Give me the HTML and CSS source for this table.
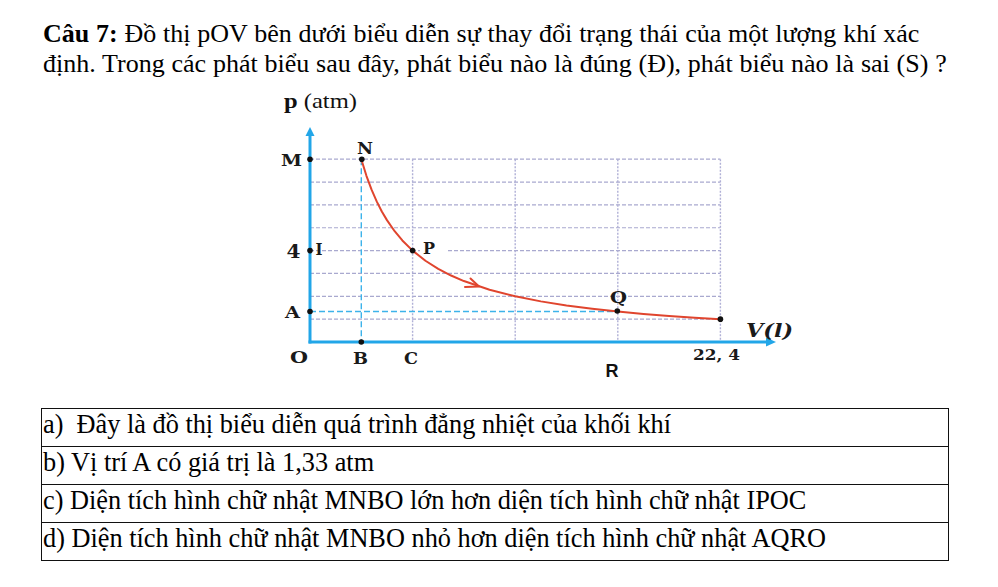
FILE: index.html
```html
<!DOCTYPE html>
<html lang="vi">
<head>
<meta charset="utf-8">
<title>Câu 7</title>
<link rel="stylesheet" href="styles.css">
</head>
<body>
<div class="page">
  <p class="question"><b>Câu 7:</b> Đồ thị pOV bên dưới biểu diễn sự thay đổi trạng thái của một lượng khí xác<br>định. Trong các phát biểu sau đây, phát biểu nào là đúng (Đ), phát biểu nào là sai (S) ?</p>
  <svg class="graph" width="540" height="310" viewBox="260 85 540 310" xmlns="http://www.w3.org/2000/svg">
    <!-- grid -->
    <g class="grid-h">
      <line x1="310" y1="319.15" x2="720.4" y2="319.15"/>
      <line x1="310" y1="296.3" x2="720.4" y2="296.3"/>
      <line x1="310" y1="273.45" x2="720.4" y2="273.45"/>
      <line x1="310" y1="250.6" x2="720.4" y2="250.6"/>
      <line x1="310" y1="227.75" x2="720.4" y2="227.75"/>
      <line x1="310" y1="204.9" x2="720.4" y2="204.9"/>
      <line x1="310" y1="182.05" x2="720.4" y2="182.05"/>
      <line x1="310" y1="159.2" x2="720.4" y2="159.2"/>
    </g>
    <g class="grid-v">
      <line x1="412.6" y1="159.2" x2="412.6" y2="342"/>
      <line x1="515.2" y1="159.2" x2="515.2" y2="342"/>
      <line x1="617.8" y1="159.2" x2="617.8" y2="342"/>
      <line x1="720.4" y1="159.2" x2="720.4" y2="342"/>
    </g>
    <g class="guide">
      <line x1="361.3" y1="159.2" x2="361.3" y2="342"/>
      <line x1="310" y1="311.5" x2="617.8" y2="311.5"/>
    </g>
    <!-- label backgrounds -->
    <rect class="mask" x="420" y="240" width="28" height="15"/>
    <!-- axes -->
    <g class="axis">
      <line x1="310" y1="343.5" x2="310" y2="134"/>
      <line x1="308.5" y1="342" x2="768" y2="342"/>
    </g>
    <path class="axis-head" d="M310 127 L314.5 136 L305.5 136 Z"/>
    <path class="axis-head" d="M776 342 L766 337.5 L766 346.5 Z"/>
    <!-- curve -->
    <polyline class="curve" points="361.3,159.2 366.43,175.82 371.56,189.67 376.69,201.38 381.82,211.43 386.95,220.13 394.65,231.21 402.34,240.44 412.6,250.6 425.43,260.76 438.25,268.88 451.08,275.53 463.9,281.07 489.55,289.77 515.2,296.3 540.85,301.38 566.5,305.44 592.15,308.76 617.8,311.53 643.45,313.88 669.1,315.89 694.75,317.63 720.4,319.15"/>
    <polyline class="curve" points="470.5,278.5 479,286.5 465,287"/>
    <!-- points -->
    <g class="dot">
      <circle cx="310" cy="159.2" r="2.8"/>
      <circle cx="361.8" cy="159.2" r="2.8"/>
      <circle cx="310" cy="250.6" r="2.8"/>
      <circle cx="412.6" cy="250.6" r="2.8"/>
      <circle cx="310" cy="311.5" r="2.8"/>
      <circle cx="361.3" cy="342" r="2.8"/>
      <circle cx="617.3" cy="311" r="2.8"/>
      <circle cx="720.4" cy="319.15" r="2.8"/>
    </g>
    <!-- labels -->
    <text class="lbl-title" x="284" y="108" textLength="73" lengthAdjust="spacingAndGlyphs"><tspan class="bold">p</tspan> (atm)</text>
    <g class="lbl">
      <text x="281" y="165.5" textLength="21" lengthAdjust="spacingAndGlyphs">M</text>
      <text x="357" y="153.5" textLength="16" lengthAdjust="spacingAndGlyphs">N</text>
      <text class="big" x="286.5" y="257.5" textLength="14" lengthAdjust="spacingAndGlyphs">4</text>
      <text x="315.5" y="255" textLength="7" lengthAdjust="spacingAndGlyphs">I</text>
      <text x="423" y="253.5" textLength="12" lengthAdjust="spacingAndGlyphs">P</text>
      <text x="610" y="302.5" textLength="17" lengthAdjust="spacingAndGlyphs">Q</text>
      <text x="285" y="317.5" textLength="15" lengthAdjust="spacingAndGlyphs">A</text>
      <text x="290" y="362.5" textLength="18" lengthAdjust="spacingAndGlyphs">O</text>
      <text x="353" y="363.5" textLength="15" lengthAdjust="spacingAndGlyphs">B</text>
      <text x="404" y="363.5" textLength="14" lengthAdjust="spacingAndGlyphs">C</text>
      <text class="num" x="693" y="360" textLength="47" lengthAdjust="spacingAndGlyphs">22, 4</text>
      <text class="ital" x="746" y="337" textLength="47" lengthAdjust="spacingAndGlyphs">V(<tspan>l</tspan>)</text>
    </g>
    <text class="lbl-r" x="605.5" y="377">R</text>
  </svg>
  <table class="choices">
    <tr><td>a)&nbsp; Đây là đồ thị biểu diễn quá trình đẳng nhiệt của khối khí</td></tr>
    <tr><td>b) Vị trí A có giá trị là 1,33 atm</td></tr>
    <tr><td>c) Diện tích hình chữ nhật MNBO lớn hơn diện tích hình chữ nhật IPOC</td></tr>
    <tr><td>d) Diện tích hình chữ nhật MNBO nhỏ hơn diện tích hình chữ nhật AQRO</td></tr>
  </table>
</div>
</body>
</html>
```
FILE: styles.css
```css
html, body {
  margin: 0;
  padding: 0;
  background: #ffffff;
}
.page {
  width: 998px;
  height: 587px;
  overflow: hidden;
  font-family: "Liberation Serif", "Times New Roman", serif;
  color: #000;
}
.question {
  margin: 0;
  padding: 19px 0 0 43px;
  font-size: 26px;
  line-height: 30px;
  word-spacing: 0.3px;
  white-space: nowrap;
}
.graph {
  display: block;
  margin: 6px 0 0 260px;
}
.grid-h line {
  stroke: #a9a9cf;
  stroke-width: 1.2;
  stroke-dasharray: 4 2;
}
.grid-v line {
  stroke: #b0b0d6;
  stroke-width: 1.4;
  stroke-dasharray: 2 1.5;
}
.guide line {
  stroke: #3db3ea;
  stroke-width: 1.4;
  stroke-dasharray: 6 3;
}
.mask {
  fill: #ffffff;
}
.axis line {
  stroke: #22a6e8;
  stroke-width: 3;
}
.axis-head {
  fill: #22a6e8;
}
.curve {
  fill: none;
  stroke: #e0452e;
  stroke-width: 2;
  stroke-linejoin: round;
  stroke-linecap: round;
}
.dot circle {
  fill: #111111;
}
.lbl-title {
  font-family: "Liberation Serif", serif;
  font-size: 21px;
  fill: #111;
}
.bold {
  font-weight: bold;
}
.lbl text {
  font-family: "DejaVu Serif", serif;
  font-weight: bold;
  font-size: 16px;
  fill: #1a1a1a;
}
.lbl text.big {
  font-size: 18px;
}
.lbl text.num {
  font-size: 14px;
}
.lbl text.ital {
  font-style: italic;
  font-size: 18px;
}
.lbl-r {
  font-family: "Liberation Sans", Arial, sans-serif;
  font-weight: bold;
  font-size: 18px;
  fill: #111;
}
.choices {
  border-collapse: collapse;
  margin: 13px 0 0 41px;
  width: 908px;
  font-size: 26.3px;
}
.choices td {
  border: 1.3px solid #111;
  padding: 0 0 5px 1px;
  line-height: 32px;
  white-space: nowrap;
}
```
